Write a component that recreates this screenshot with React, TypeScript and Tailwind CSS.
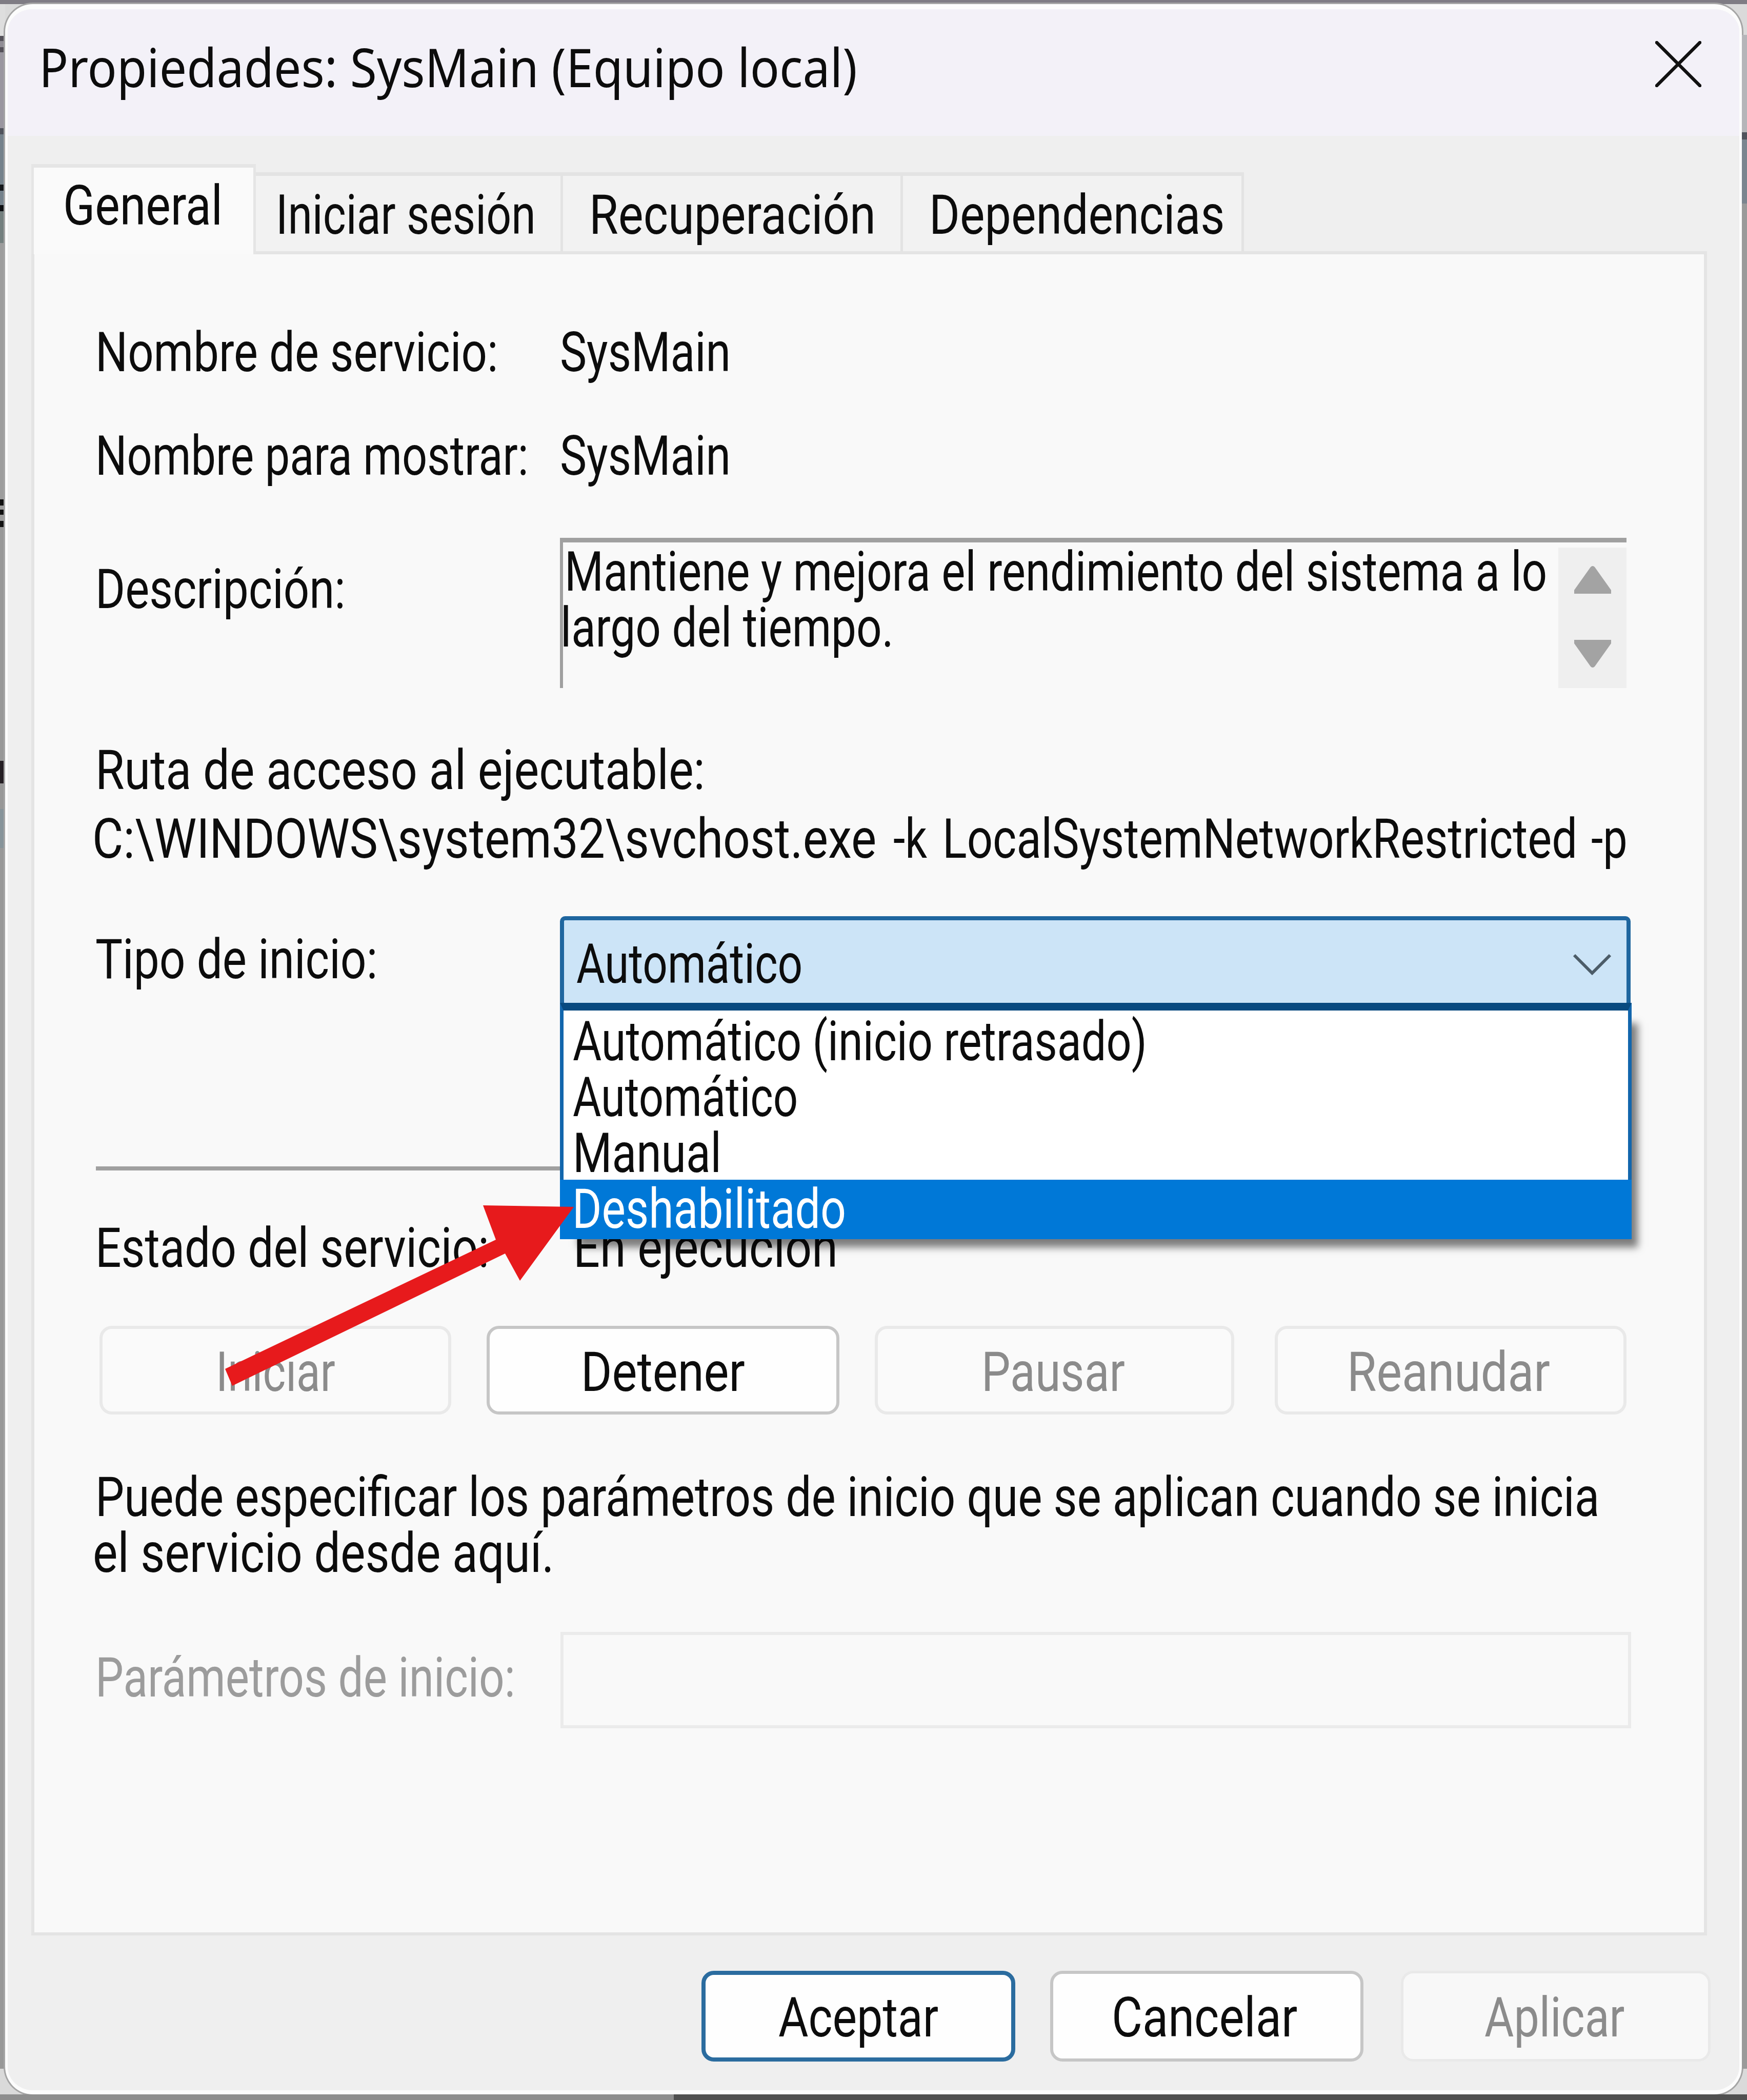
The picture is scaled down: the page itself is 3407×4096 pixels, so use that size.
import { useLayoutEffect, useRef, useState } from 'react';
import clsx from 'clsx';

type TextProps = { children: string; className?: string };

// One line of text squeezed horizontally to the width of its box.
function Text({ children, className }: TextProps) {
  const box = useRef<HTMLDivElement>(null);
  const line = useRef<HTMLSpanElement>(null);
  const [scale, setScale] = useState(0.8);

  useLayoutEffect(() => {
    if (box.current && line.current) {
      setScale(box.current.clientWidth / line.current.offsetWidth);
    }
  }, [children]);

  return (
    <div ref={box} className={clsx('h-[110px] shrink-0 pt-[5px] leading-[106px]', className)}>
      <span
        ref={line}
        className="block w-max origin-left whitespace-nowrap"
        style={{ transform: `scaleX(${scale})` }}
      >
        {children}
      </span>
    </div>
  );
}

const tabs = [
  { label: 'Iniciar sesión', box: 'w-[599px] pl-[39px]', text: 'w-[507px]' },
  { label: 'Recuperación', box: 'w-[663px] pl-[51px]', text: 'w-[559px]' },
  { label: 'Dependencias', box: 'w-[665px] pl-[51px]', text: 'w-[577px]' },
];

const options = [
  { label: 'Automático (inicio retrasado)', text: 'w-[1120px]' },
  { label: 'Automático', text: 'w-[439px]' },
  { label: 'Manual', text: 'w-[290px]' },
];

const actions = [
  { label: 'Iniciar', enabled: false, box: 'w-[686px] mr-[69px]', text: 'w-[233px]' },
  { label: 'Detener', enabled: true, box: 'w-[688px] mr-[69px]', text: 'w-[320px]' },
  { label: 'Pausar', enabled: false, box: 'w-[701px] mr-[79px] pr-[6px]', text: 'w-[280px]' },
  { label: 'Reanudar', enabled: false, box: 'w-[686px] pr-[8px]', text: 'w-[396px]' },
];

function TitleBar() {
  return (
    <div className="flex h-[247px] shrink-0 items-start justify-between bg-[#f3f1f8] pr-[74px] pl-[61px]">
      <Text className="mt-[54px] w-[1596px] font-['Noto_Sans'] text-[104px]">
        Propiedades: SysMain (Equipo local)
      </Text>
      <svg viewBox="0 0 90 90" className="mt-[62px] size-[90px]" fill="none" stroke="#111" strokeWidth="6.5">
        <path d="M3 3 87 87M87 3 3 87" strokeLinecap="round" />
      </svg>
    </div>
  );
}

function TabBar() {
  return (
    <div className="flex h-[173px] items-end">
      <div className="relative z-10 -mb-[6px] h-[176px] w-[438px] border-x-[5px] border-t-[7px] border-[#e5e5e5] border-b-0 bg-[#fafafa] pt-[17px] pl-[57px]">
        <Text className="w-[311px]">General</Text>
      </div>
      {tabs.map((tab) => (
        <div
          key={tab.label}
          className={clsx('h-[154px] border-t-[7px] border-r-[5px] border-[#e3e3e3] bg-[#f2f2f2] pt-[19px]', tab.box)}
        >
          <Text className={tab.text}>{tab.label}</Text>
        </div>
      ))}
    </div>
  );
}

function Description() {
  return (
    <div className="mt-[107px] flex h-[293px] items-start">
      <Text className="mt-[43px] mr-[418px] w-[488px]">Descripción:</Text>
      <div className="flex h-[293px] w-[2080px] border-t-[9px] border-l-[6px] border-[#a0a0a0]">
        <div className="w-[1941px] pl-[3px]">
          <Text className="w-[1916px]">Mantiene y mejora el rendimiento del sistema a lo</Text>
          <Text className="-mt-px -ml-[8px] w-[650px]">largo del tiempo.</Text>
        </div>
        <div className="mt-[10px] flex grow flex-col items-center justify-between bg-[#efefef] pt-[36px] pb-[40px]">
          <svg viewBox="0 0 72 54" className="h-[54px] w-[72px]" fill="#a3a3a3">
            <path d="M32 2q4-4 8 0l32 45v7H0v-7z" />
          </svg>
          <svg viewBox="0 0 72 54" className="h-[54px] w-[72px]" fill="#a3a3a3">
            <path d="M32 52q4 4 8 0L72 7V0H0v7z" />
          </svg>
        </div>
      </div>
    </div>
  );
}

function StartupType() {
  return (
    <div className="relative z-10 mt-[98px] flex h-[171px]">
      <Text className="mt-[27px] mr-[356px] w-[550px]">Tipo de inicio:</Text>
      <div className="relative flex h-[178px] w-[2088px] items-start justify-between rounded-[10px] border-[8px] border-[#1f669f] bg-[#cce4f7] pt-[28px] pr-[28px] pl-[24px]">
        <Text className="w-[441px]">Automático</Text>
        <svg viewBox="0 0 78 44" className="mt-[36px] h-[44px] w-[78px]" fill="none" stroke="#4c5c68" strokeWidth="6">
          <path d="M4 4 39 39 74 4" />
        </svg>
        <div className="absolute top-[161px] -left-[8px] h-[461px] w-[2090px] bg-white shadow-[24px_28px_14px_-12px_rgba(0,0,0,0.5)]">
          <div className="h-[345px] border-x-[7px] border-t-[15px] border-[#1266ad] border-t-[#084a80] pt-[3px] pl-[18px]">
            {options.map((option) => (
              <Text key={option.label} className={clsx('-mb-px', option.text)}>
                {option.label}
              </Text>
            ))}
          </div>
          <div className="h-[116px] bg-[#0078d7] pl-[24px] text-white">
            <Text className="w-[534px]">Deshabilitado</Text>
          </div>
        </div>
      </div>
    </div>
  );
}

function GeneralPanel() {
  return (
    <div className="relative flex h-[3285px] flex-col border-[6px] border-[#e4e4e4] bg-[#f9f9f9] pt-[134px] pl-[119px]">
      <div className="flex">
        <Text className="mr-[121px] w-[785px]">Nombre de servicio:</Text>
        <Text className="w-[333px]">SysMain</Text>
      </div>
      <div className="mt-[92px] flex">
        <Text className="mr-[61px] w-[845px]">Nombre para mostrar:</Text>
        <Text className="w-[333px]">SysMain</Text>
      </div>
      <Description />
      <Text className="mt-[103px] w-[1189px]">Ruta de acceso al ejecutable:</Text>
      <div className="mt-[24px] -ml-[6px] flex">
        <Text className="mr-[33px] w-[1529px]">C:\WINDOWS\system32\svchost.exe</Text>
        <Text className="mr-[30px] w-[66px]">-k</Text>
        <Text className="mr-[27px] w-[1238px]">LocalSystemNetworkRestricted</Text>
        <Text className="w-[71px]">-p</Text>
      </div>
      <StartupType />
      <div className="mt-[317px] ml-px h-[8px] w-[2985px] shrink-0 bg-[#a0a0a0]" />
      <div className="mt-[94px] flex">
        <Text className="mr-[164px] w-[768px]">Estado del servicio:</Text>
        <Text className="w-[516px]">En ejecución</Text>
      </div>
      <div className="mt-[99px] ml-[8px] flex h-[173px]">
        {actions.map((action) => (
          <div
            key={action.label}
            className={clsx(
              'flex shrink-0 justify-center rounded-[24px] border-[6px] pt-[27px]',
              action.enabled ? 'border-[#c6c6c6] bg-[#fefefe]' : 'border-[#e9e9e9] bg-[#fafafa] text-[#8b8b8b]',
              action.box,
            )}
          >
            <Text className={action.text}>{action.label}</Text>
          </div>
        ))}
      </div>
      <Text className="mt-[104px] w-[2933px]">
        Puede especificar los parámetros de inicio que se aplican cuando se inicia
      </Text>
      <Text className="-mt-px -ml-[5px] w-[900px]">el servicio desde aquí.</Text>
      <div className="mt-[101px] flex text-[#9c9c9c]">
        <Text className="mt-[32px] mr-[88px] w-[819px]">Parámetros de inicio:</Text>
        <div className="h-[188px] w-[2088px] border-[6px] border-[#ebebeb]" />
      </div>

      <svg viewBox="0 0 700 380" className="absolute top-[1845px] left-[365px] z-20 h-[380px] w-[700px]" fill="#e71a1c">
        <path d="M7 329 535 77 510 10 687 13 582 157 553 104 21 362z" />
      </svg>
    </div>
  );
}

function Footer() {
  return (
    <div className="mt-[69px] flex h-[177px]">
      <div className="mr-[68px] ml-[1353px] flex w-[612px] shrink-0 justify-center rounded-[24px] border-[8px] border-[#2b6c9f] bg-[#fefefe] pt-[26px]">
        <Text className="w-[312px]">Aceptar</Text>
      </div>
      <div className="mr-[73px] flex w-[611px] shrink-0 justify-center rounded-[24px] border-[6px] border-[#c6c6c6] bg-[#fefefe] pt-[28px] pr-[10px]">
        <Text className="w-[362px]">Cancelar</Text>
      </div>
      <div className="flex w-[604px] shrink-0 justify-center rounded-[24px] border-[5px] border-[#e9e9e9] bg-[#f8f8f8] pt-[29px] pr-[6px] text-[#8b8b8b]">
        <Text className="w-[273px]">Aplicar</Text>
      </div>
    </div>
  );
}

// Slivers of the window behind the dialog, left edge.
const edge = [
  'h-[62px] bg-[#dedede]',
  'h-[10px] bg-[#55525a]',
  'h-[12px] bg-[#918e96]',
  'h-[10px] bg-[#55525a]',
  'h-[148px] bg-[#9a97a0]',
  'h-[12px] bg-[#50535c]',
  'h-[98px] bg-[#75828c]',
  'h-[12px] bg-[#15181c]',
  'h-[28px] bg-[#75828c]',
  'h-[12px] bg-[#0d0f12]',
  'h-[62px] bg-[#74807f]',
  'h-[500px] bg-[#9d9d9d]',
  'h-[12px] bg-[#111111]',
  'h-[8px] bg-[#9d9d9d]',
  'h-[10px] bg-[#111111]',
  'h-[12px] bg-[#9d9d9d]',
  'h-[12px] bg-[#111111]',
  'h-[456px] bg-[#989898]',
  'h-[44px] bg-[#251f24]',
  'h-[50px] bg-[#989898]',
  'h-[76px] bg-[#87949a]',
  'grow bg-[#989898]',
];

export default function App() {
  return (
    <div className="flex h-[4096px] w-[3407px] flex-col overflow-hidden bg-[#dadada] font-[Roboto] text-[107px] text-[#0c0c0c]">
      <div className="h-[8px] shrink-0 bg-[#7f7c84]" />
      <div className="flex h-[4077px] shrink-0">
        <div className="flex w-[10px] flex-col pb-[50px]">
          {edge.map((color, i) => (
            <div key={i} className={clsx('shrink-0', color)} />
          ))}
        </div>
        <div className="flex w-[3387px] flex-col overflow-hidden rounded-[54px] border-x-[5px] border-t-[10px] border-b-[8px] border-[#fcfcfc] bg-[#efefef] shadow-[0_0_0_3px_#a5a5a5]">
          <TitleBar />
          <div className="mt-[52px] ml-[46px] w-[3268px]">
            <TabBar />
            <GeneralPanel />
          </div>
          <Footer />
        </div>
        <div className="flex w-[10px] flex-col pt-[60px] pb-[50px]">
          <div className="h-[190px] bg-[#b5b5b9]" />
          <div className="h-[14px] bg-[#50535c]" />
          <div className="h-[125px] bg-[#7b858f]" />
          <div className="grow bg-[#9a9a9a]" />
        </div>
      </div>
      <div className="flex h-[11px] shrink-0">
        <div className="w-[1314px] bg-[#8e8e8e]" />
        <div className="grow bg-[#505050]" />
      </div>
    </div>
  );
}
